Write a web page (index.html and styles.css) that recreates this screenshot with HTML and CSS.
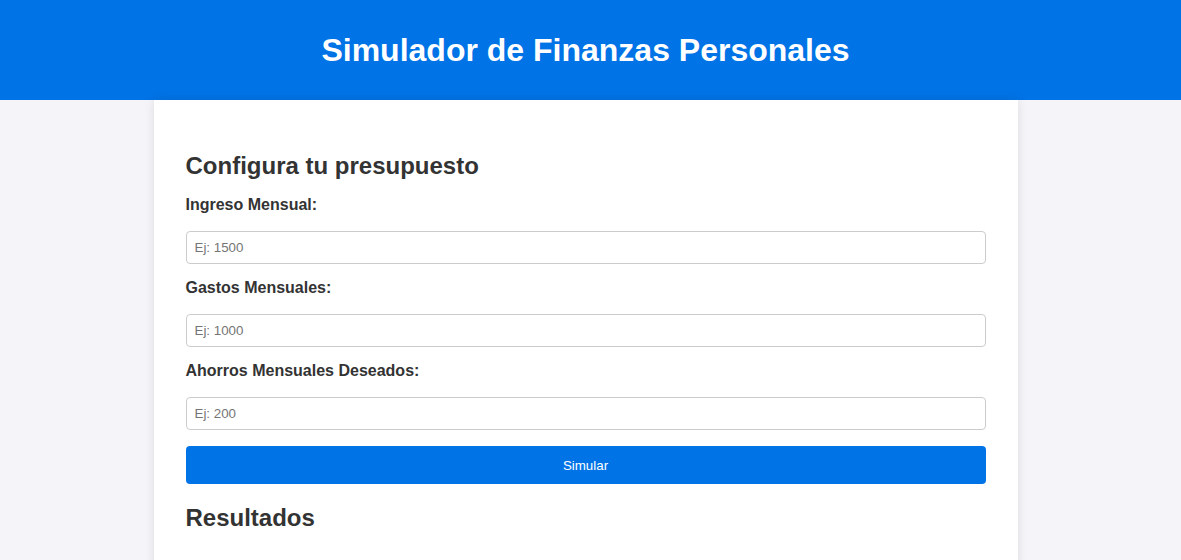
FILE: index.html
```html
<!DOCTYPE html>
<html lang="es">
<head>
<meta charset="utf-8">
<title>Simulador de Finanzas Personales</title>
<link rel="stylesheet" href="styles.css">
</head>
<body>
<header class="site-header">
  <h1 class="site-title">Simulador de Finanzas Personales</h1>
</header>
<div class="page">
  <main class="card">
    <h2 class="section-title">Configura tu presupuesto</h2>
    <form class="budget-form">
      <label class="field-label" for="ingreso">Ingreso Mensual:</label>
      <input class="field-input" id="ingreso" type="number" placeholder="Ej: 1500">
      <label class="field-label" for="gastos">Gastos Mensuales:</label>
      <input class="field-input" id="gastos" type="number" placeholder="Ej: 1000">
      <label class="field-label" for="ahorros">Ahorros Mensuales Deseados:</label>
      <input class="field-input" id="ahorros" type="number" placeholder="Ej: 200">
      <button class="submit-btn" type="button">Simular</button>
    </form>
    <h2 class="section-title results-title">Resultados</h2>
    <div class="results"></div>
  </main>
</div>
</body>
</html>
```
FILE: styles.css
```css
* { box-sizing: border-box; }
body {
  margin: 0;
  background: #f4f4f9;
  color: #333;
  font-family: "Liberation Sans", Arial, sans-serif;
}
.site-header {
  background: #0073e6;
  color: #fff;
  text-align: center;
  height: 100px;
  padding-right: 10px;
  display: flex;
  align-items: center;
  justify-content: center;
}
.site-title {
  margin: 0;
  font-size: 32px;
  font-weight: bold;
}
.page { padding-right: 10px; }
.card {
  max-width: 864px;
  margin: 0 auto;
  background: #fff;
  padding: 32px;
  box-shadow: 0 0 10px rgba(0,0,0,0.1);
  min-height: 600px;
}
.section-title {
  font-size: 24px;
  margin: 20px 0 16px;
}
.results-title { margin-top: 20px; }
.budget-form { display: flex; flex-direction: column; }
.field-label {
  display: block;
  font-weight: bold;
  font-size: 16px;
  margin-bottom: 17px;
}
.field-input {
  width: 100%;
  height: 33px;
  padding: 8px;
  border: 1px solid #ccc;
  border-radius: 4px;
  font-family: "Liberation Sans", Arial, sans-serif;
  font-size: 13.33px;
  margin-bottom: 15px;
}
.field-input::placeholder { color: #757575; }
.submit-btn {
  width: 100%;
  height: 38px;
  margin-top: 1px;
  background: #0073e6;
  color: #fff;
  border: none;
  border-radius: 4px;
  font-family: "Liberation Sans", Arial, sans-serif;
  font-size: 13.33px;
  cursor: pointer;
}
```
